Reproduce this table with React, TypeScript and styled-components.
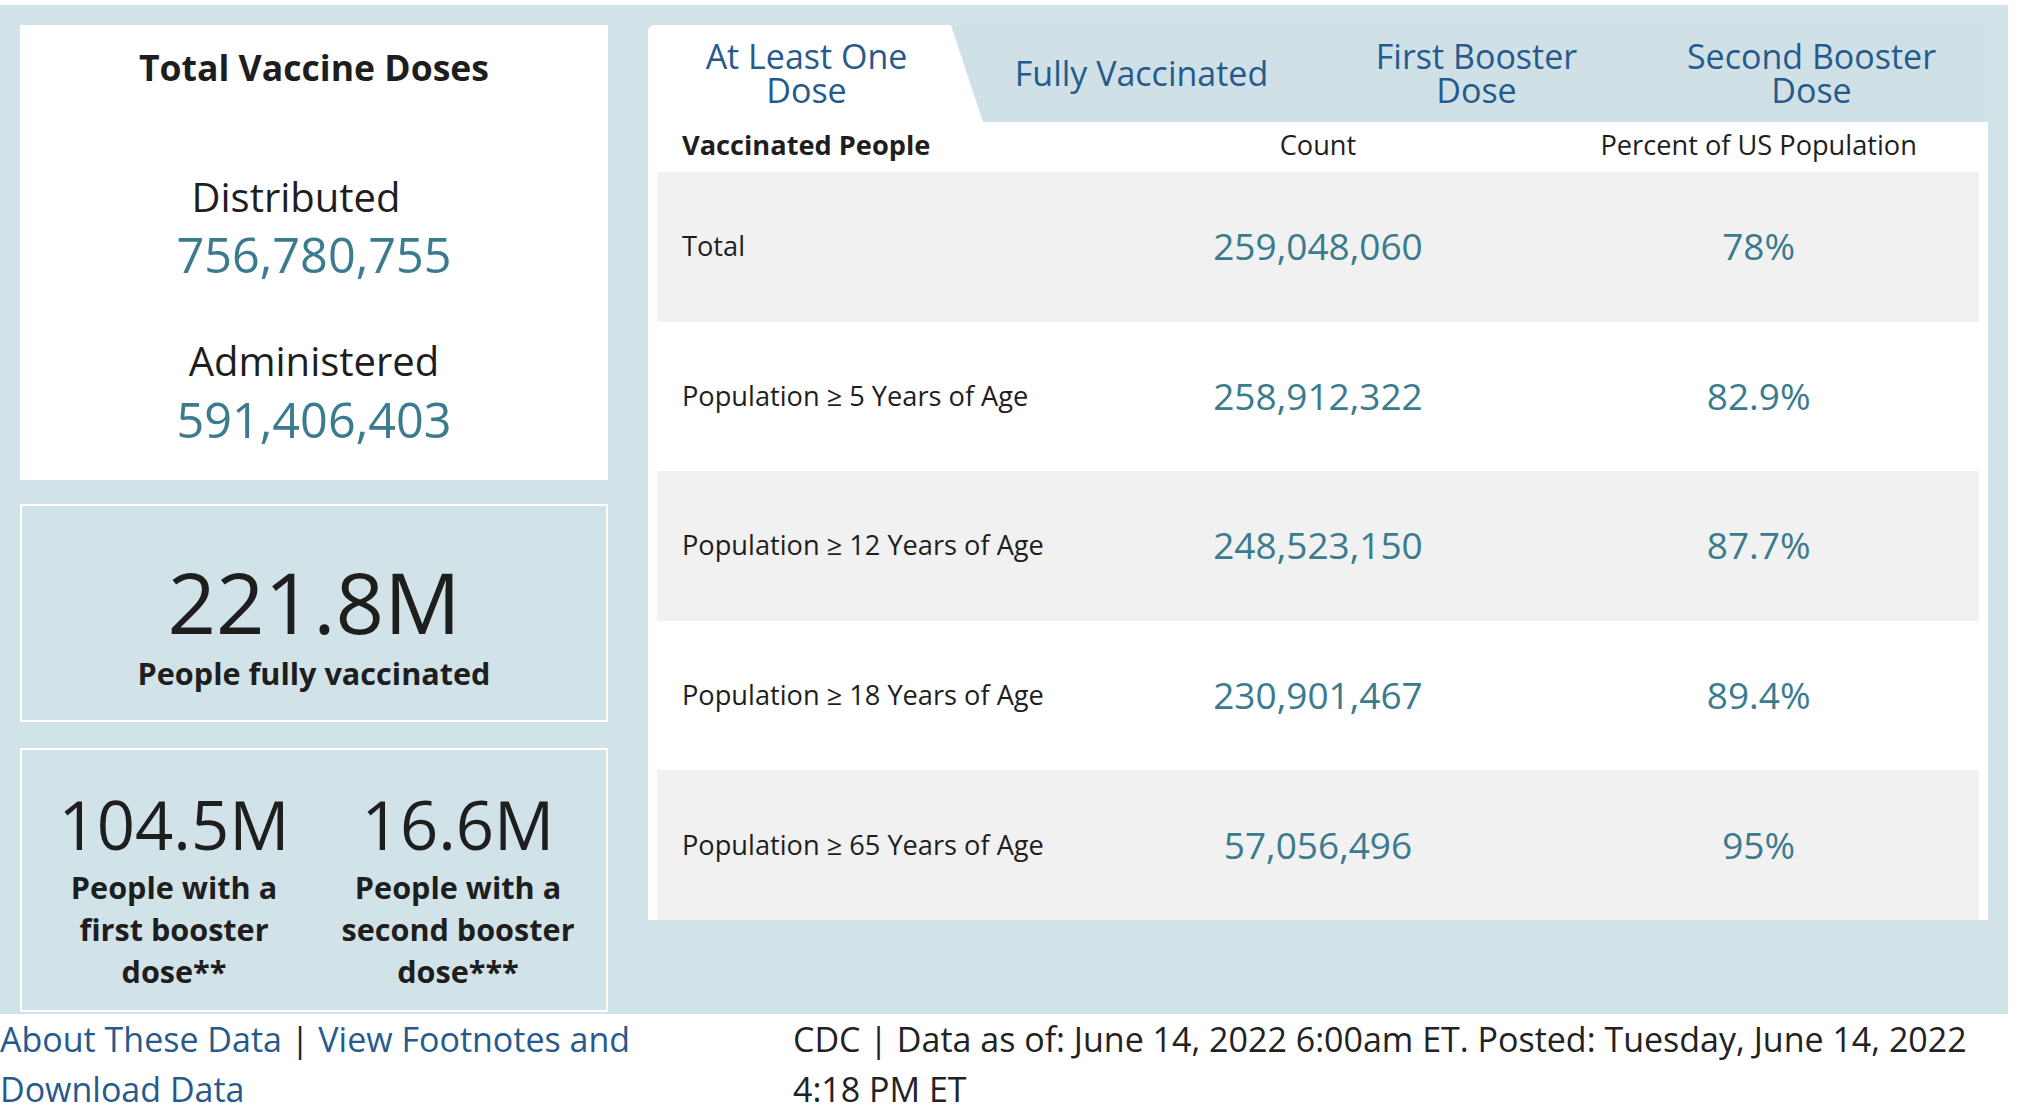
import React from "react";
import styled, { createGlobalStyle, css } from "styled-components";

const GlobalStyle = createGlobalStyle`
  html, body { margin: 0; padding: 0; background: #ffffff; }
  body { font-family: "Open Sans", "Noto Sans", sans-serif; color: #1e1e1e; }
  *, *::before, *::after { box-sizing: border-box; }
`;

const BG = "#d1e3e8";
const TEAL = "#3a7b8d";
const NAVY = "#265a8d";
const INK = "#1e1e1e";

const Page = styled.div`
  width: 2044px;
  padding-top: 5px;
  font-family: "Open Sans", "Noto Sans", sans-serif;
`;

const Dashboard = styled.section`
  width: 2008px;
  height: 1009px;
  background: ${BG};
  padding: 20px 20px 2px 20px;
  display: grid;
  grid-template-columns: 588px 1340px;
  column-gap: 40px;
`;

const LeftColumn = styled.div`
  display: flex;
  flex-direction: column;
  height: 100%;
`;

const TotalCard = styled.div`
  height: 455px;
  background: #ffffff;
  display: flex;
  flex-direction: column;
  align-items: center;
  padding-top: 18px;
`;

const CardTitle = styled.h2`
  margin: 0;
  font-size: 35.6px;
  line-height: 48px;
  font-weight: 700;
  color: ${INK};
`;

const DoseLabel = styled.div<{ $gap: number; $shift?: number }>`
  margin-top: ${(p) => p.$gap}px;
  padding-right: ${(p) => p.$shift ?? 0}px;
  font-size: 40px;
  line-height: 52px;
  color: ${INK};
`;

const DoseNumber = styled.div<{ $gap: number }>`
  margin-top: ${(p) => p.$gap}px;
  font-size: 48.6px;
  line-height: 52px;
  color: ${TEAL};
`;

const StatCard = styled.div<{ $gap: number; $pad: number; $fill?: boolean }>`
  margin-top: ${(p) => p.$gap}px;
  border: 2px solid #ffffff;
  padding-top: ${(p) => p.$pad}px;
  ${(p) =>
    p.$fill
      ? css`
          flex: 1;
        `
      : css`
          height: 218px;
        `}
`;

const StatBlock = styled.div`
  display: flex;
  flex-direction: column;
  align-items: center;
  text-align: center;
`;

const StatValue = styled.div<{ $size: number; $lh: number }>`
  font-size: ${(p) => p.$size}px;
  line-height: ${(p) => p.$lh}px;
  color: ${INK};
`;

const StatCaption = styled.div<{ $lh: number }>`
  margin-top: 6px;
  font-size: 30.6px;
  line-height: ${(p) => p.$lh}px;
  font-weight: 700;
  color: ${INK};
`;

const BoosterGrid = styled.div`
  display: grid;
  grid-template-columns: 1fr 1fr;
  padding: 0 6px 0 10px;
`;

const RightPanel = styled.div`
  display: flex;
  flex-direction: column;
  height: 895px;
`;

const TabBar = styled.div`
  display: grid;
  grid-template-columns: repeat(4, 1fr);
  height: 97px;
  background: #cfe1e6;
  border-radius: 6px 6px 0 0;
`;

const Tab = styled.button<{ $active?: boolean }>`
  all: unset;
  box-sizing: border-box;
  display: flex;
  flex-direction: column;
  align-items: center;
  justify-content: center;
  padding: 0 18px 2px 0;
  font-family: "Open Sans", "Noto Sans", sans-serif;
  font-size: 34px;
  line-height: 34px;
  color: ${NAVY};
  text-align: center;
  cursor: pointer;
  border-radius: 6px 6px 0 0;
  background: ${(p) => (p.$active ? "#ffffff" : "transparent")};
  ${(p) =>
    p.$active &&
    css`
      clip-path: polygon(0 0, 90.4% 0, 100% 100%, 0 100%);
    `}
`;

const Table = styled.div`
  flex: 1;
  background: #ffffff;
  padding: 0 9px;
  display: flex;
  flex-direction: column;
`;

const HeaderRow = styled.div`
  display: grid;
  grid-template-columns: repeat(3, 1fr);
  height: 50px;
  padding-bottom: 5px;
  align-items: center;
  font-size: 27.2px;
  color: ${INK};
`;

const HeadLabel = styled.div`
  padding-left: 25px;
  font-weight: 700;
`;

const HeadCell = styled.div`
  text-align: center;
`;

const Row = styled.div<{ $shaded: boolean }>`
  display: grid;
  grid-template-columns: repeat(3, 1fr);
  height: 149.6px;
  padding-bottom: 2px;
  align-items: center;
  background: ${(p) => (p.$shaded ? "#f1f1f1" : "#ffffff")};
`;

const RowLabel = styled.div`
  padding-left: 25px;
  font-size: 27.2px;
  color: ${INK};
`;

const RowValue = styled.div`
  text-align: center;
  font-size: 37px;
  color: ${TEAL};
`;

const Footer = styled.footer`
  display: grid;
  grid-template-columns: 720px 1215px;
  column-gap: 73px;
  font-size: 34px;
  line-height: 50px;
  color: #222222;
`;

const FooterLink = styled.a`
  color: ${NAVY};
  text-decoration: none;
`;

const tabs = [
  { lines: ["At Least One", "Dose"], active: true },
  { lines: ["Fully Vaccinated"], active: false },
  { lines: ["First Booster", "Dose"], active: false },
  { lines: ["Second Booster", "Dose"], active: false },
];

const rows = [
  { label: "Total", count: "259,048,060", pct: "78%" },
  { label: "Population ≥ 5 Years of Age", count: "258,912,322", pct: "82.9%" },
  { label: "Population ≥ 12 Years of Age", count: "248,523,150", pct: "87.7%" },
  { label: "Population ≥ 18 Years of Age", count: "230,901,467", pct: "89.4%" },
  { label: "Population ≥ 65 Years of Age", count: "57,056,496", pct: "95%" },
];

const boosters = [
  { value: "104.5M", lines: ["People with a", "first booster", "dose**"] },
  { value: "16.6M", lines: ["People with a", "second booster", "dose***"] },
];

export default function App() {
  return (
    <Page>
      <GlobalStyle />
      <Dashboard>
        <LeftColumn>
          <TotalCard>
            <CardTitle>Total Vaccine Doses</CardTitle>
            <DoseLabel $gap={80} $shift={36}>Distributed</DoseLabel>
            <DoseNumber $gap={5}>756,780,755</DoseNumber>
            <DoseLabel $gap={55}>Administered</DoseLabel>
            <DoseNumber $gap={6}>591,406,403</DoseNumber>
          </TotalCard>
          <StatCard $gap={24} $pad={49}>
            <StatBlock>
              <StatValue $size={85} $lh={92}>221.8M</StatValue>
              <StatCaption $lh={40}>People fully vaccinated</StatCaption>
            </StatBlock>
          </StatCard>
          <StatCard $gap={26} $pad={38} $fill>
            <BoosterGrid>
              {boosters.map((b) => (
                <StatBlock key={b.value}>
                  <StatValue $size={67} $lh={72}>{b.value}</StatValue>
                  <StatCaption $lh={42}>
                    {b.lines.map((l, i) => (
                      <div key={i}>{l}</div>
                    ))}
                  </StatCaption>
                </StatBlock>
              ))}
            </BoosterGrid>
          </StatCard>
        </LeftColumn>

        <RightPanel>
          <TabBar>
            {tabs.map((t) => (
              <Tab key={t.lines.join(" ")} $active={t.active}>
                {t.lines.map((l, i) => (
                  <span key={i}>{l}</span>
                ))}
              </Tab>
            ))}
          </TabBar>
          <Table>
            <HeaderRow>
              <HeadLabel>Vaccinated People</HeadLabel>
              <HeadCell>Count</HeadCell>
              <HeadCell>Percent of US Population</HeadCell>
            </HeaderRow>
            {rows.map((r, i) => (
              <Row key={r.label} $shaded={i % 2 === 0}>
                <RowLabel>{r.label}</RowLabel>
                <RowValue>{r.count}</RowValue>
                <RowValue>{r.pct}</RowValue>
              </Row>
            ))}
          </Table>
        </RightPanel>
      </Dashboard>

      <Footer>
        <div>
          <FooterLink href="#">About These Data</FooterLink> |{" "}
          <FooterLink href="#">View Footnotes and Download Data</FooterLink>
        </div>
        <div>
          CDC | Data as of: June 14, 2022 6:00am ET. Posted: Tuesday, June 14, 2022 4:18 PM ET
        </div>
      </Footer>
    </Page>
  );
}
